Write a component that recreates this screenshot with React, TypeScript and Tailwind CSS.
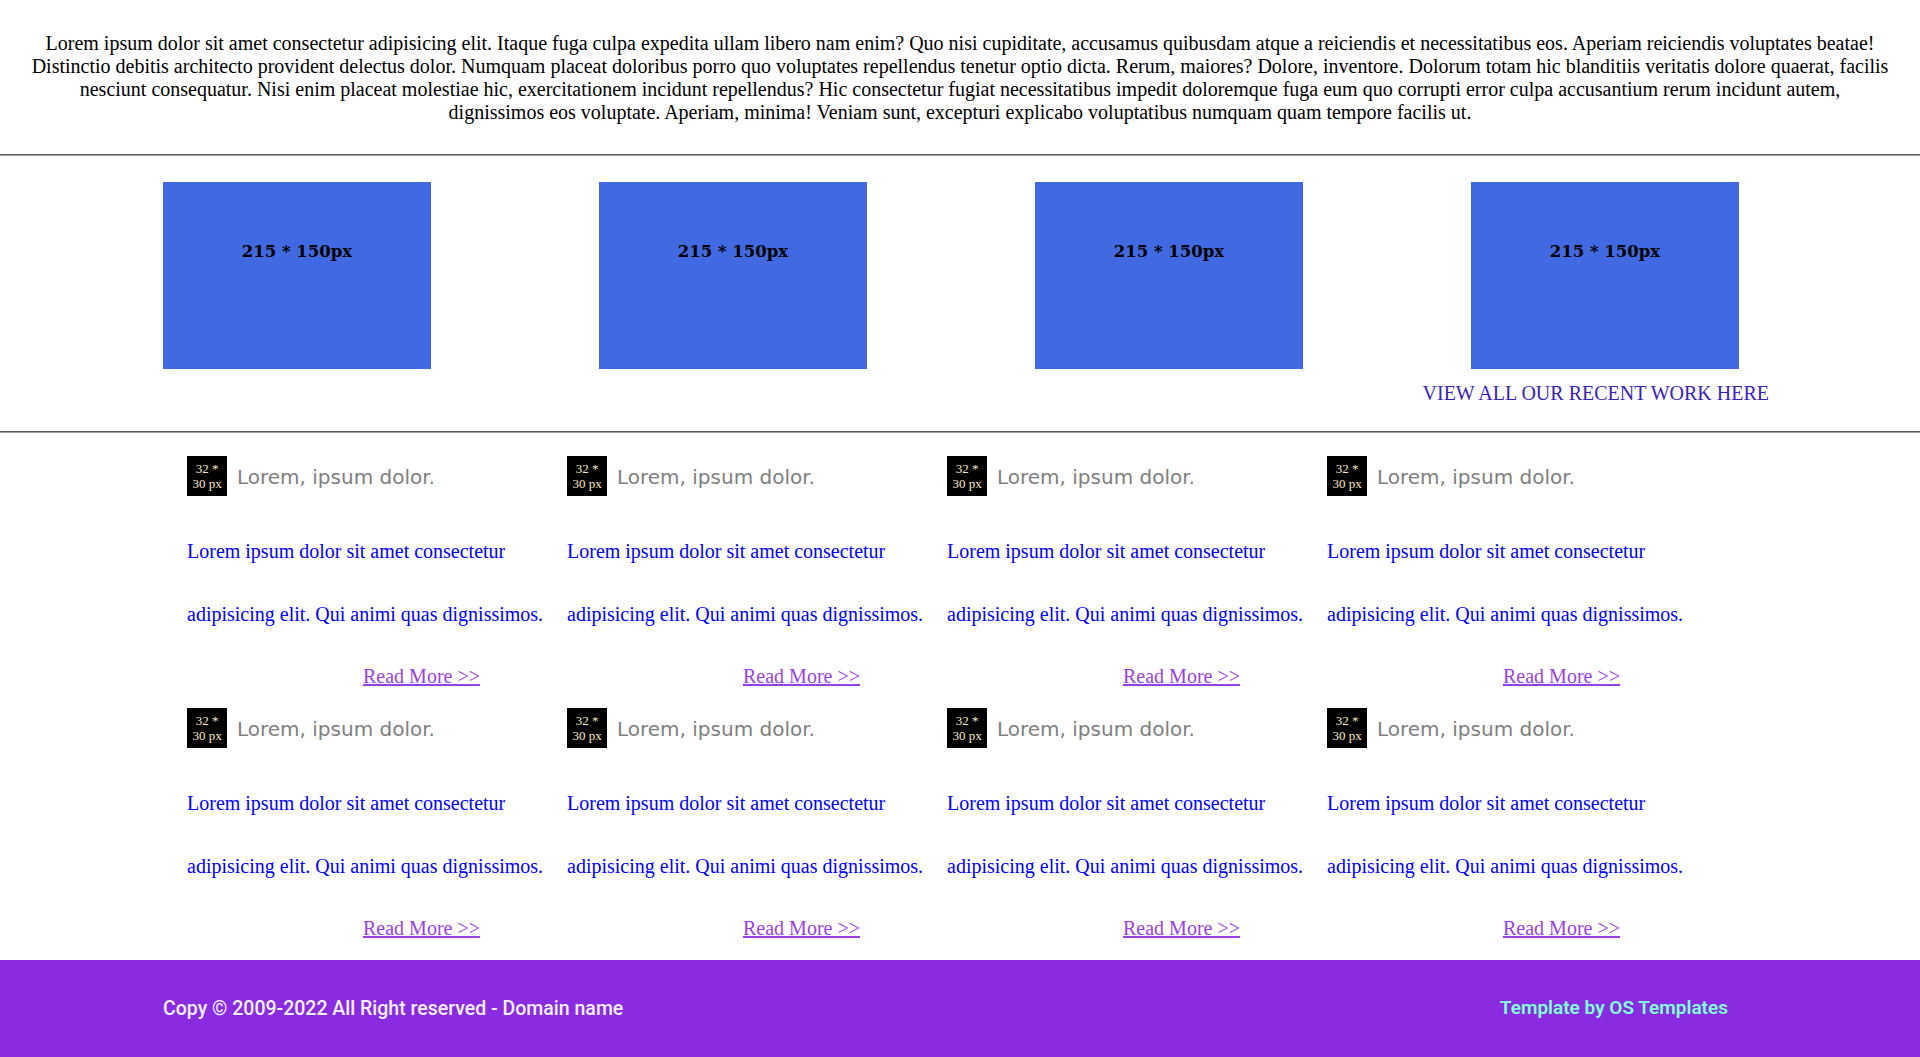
const intro =
  'Lorem ipsum dolor sit amet consectetur adipisicing elit. Itaque fuga culpa expedita ullam libero nam enim? Quo nisi cupiditate, accusamus quibusdam atque a reiciendis et necessitatibus eos. Aperiam reiciendis voluptates beatae! Distinctio debitis architecto provident delectus dolor. Numquam placeat doloribus porro quo voluptates repellendus tenetur optio dicta. Rerum, maiores? Dolore, inventore. Dolorum totam hic blanditiis veritatis dolore quaerat, facilis nesciunt consequatur. Nisi enim placeat molestiae hic, exercitationem incidunt repellendus? Hic consectetur fugiat necessitatibus impedit doloremque fuga eum quo corrupti error culpa accusantium rerum incidunt autem, dignissimos eos voluptate. Aperiam, minima! Veniam sunt, excepturi explicabo voluptatibus numquam quam tempore facilis ut.';

const Rule = () => <div className="h-[2px] w-full border-t border-b border-t-[#5c5c5c] border-b-[#a0a0a0]" />;

const WorkBox = () => (
  <div className="w-[268px] h-[187px] bg-[#4169e1] pt-[57px] text-center">
    <span className="font-['DejaVu_Serif',serif] font-bold text-[16.5px] leading-[21px] text-black">215 * 150px</span>
  </div>
);

const Card = () => (
  <div className="w-[380px]">
    <div className="flex items-center gap-[10px] h-[40px]">
      <div className="w-[40px] h-[40px] bg-black flex flex-col items-center justify-center font-['Liberation_Serif',serif] text-[13px] leading-[15px] text-[#fbe9c8]">
        <span>32 *</span>
        <span>30 px</span>
      </div>
      <span className="pt-[2px] font-['DejaVu_Sans',sans-serif] text-[20px] text-[#808080]">Lorem, ipsum dolor.</span>
    </div>
    <p className="mt-[24px] font-['Liberation_Serif',serif] text-[20px] leading-[62.5px] text-[#0000ff] w-[370px]">
      Lorem ipsum dolor sit amet consectetur adipisicing elit. Qui animi quas dignissimos.
    </p>
    <div className="pl-[176px] leading-[62px]">
      <a href="#" className="font-['Liberation_Serif',serif] text-[20px] text-[#9b3fe6] underline">
        Read More &gt;&gt;
      </a>
    </div>
  </div>
);

export default function App() {
  return (
    <div className="w-full h-[1057px] bg-white flex flex-col overflow-hidden">
      <p className="pt-[32px] pb-[30px] px-[30px] text-center font-['Liberation_Serif',serif] text-[20px] leading-[23px] text-black">
        {intro}
      </p>
      <Rule />

      <section className="pt-[26px] pb-[26px]">
        <div className="flex gap-[168px] pl-[163px]">
          <WorkBox />
          <WorkBox />
          <WorkBox />
          <WorkBox />
        </div>
        <div className="mt-[13px] flex justify-end pr-[151px]">
          <a href="#" className="font-['Liberation_Serif',serif] text-[20px] leading-[23px] text-[#3a22b8]">
            VIEW ALL OUR RECENT WORK HERE
          </a>
        </div>
      </section>
      <Rule />

      <section className="pt-[23px] pl-[187px] grid grid-cols-[repeat(4,380px)]">
        {Array.from({ length: 8 }).map((_, i) => (
          <Card key={i} />
        ))}
      </section>

      <footer className="mt-auto h-[97px] shrink-0 bg-[#8a2be2] flex items-center justify-between pl-[163px] pr-[192px] font-['Roboto',sans-serif]">
        <span className="text-[19.5px] font-medium text-[#f5f0ff]">Copy © 2009-2022 All Right reserved - Domain name</span>
        <span className="text-[19px] font-semibold text-[#7fffd4]">Template by OS Templates</span>
      </footer>
    </div>
  );
}
